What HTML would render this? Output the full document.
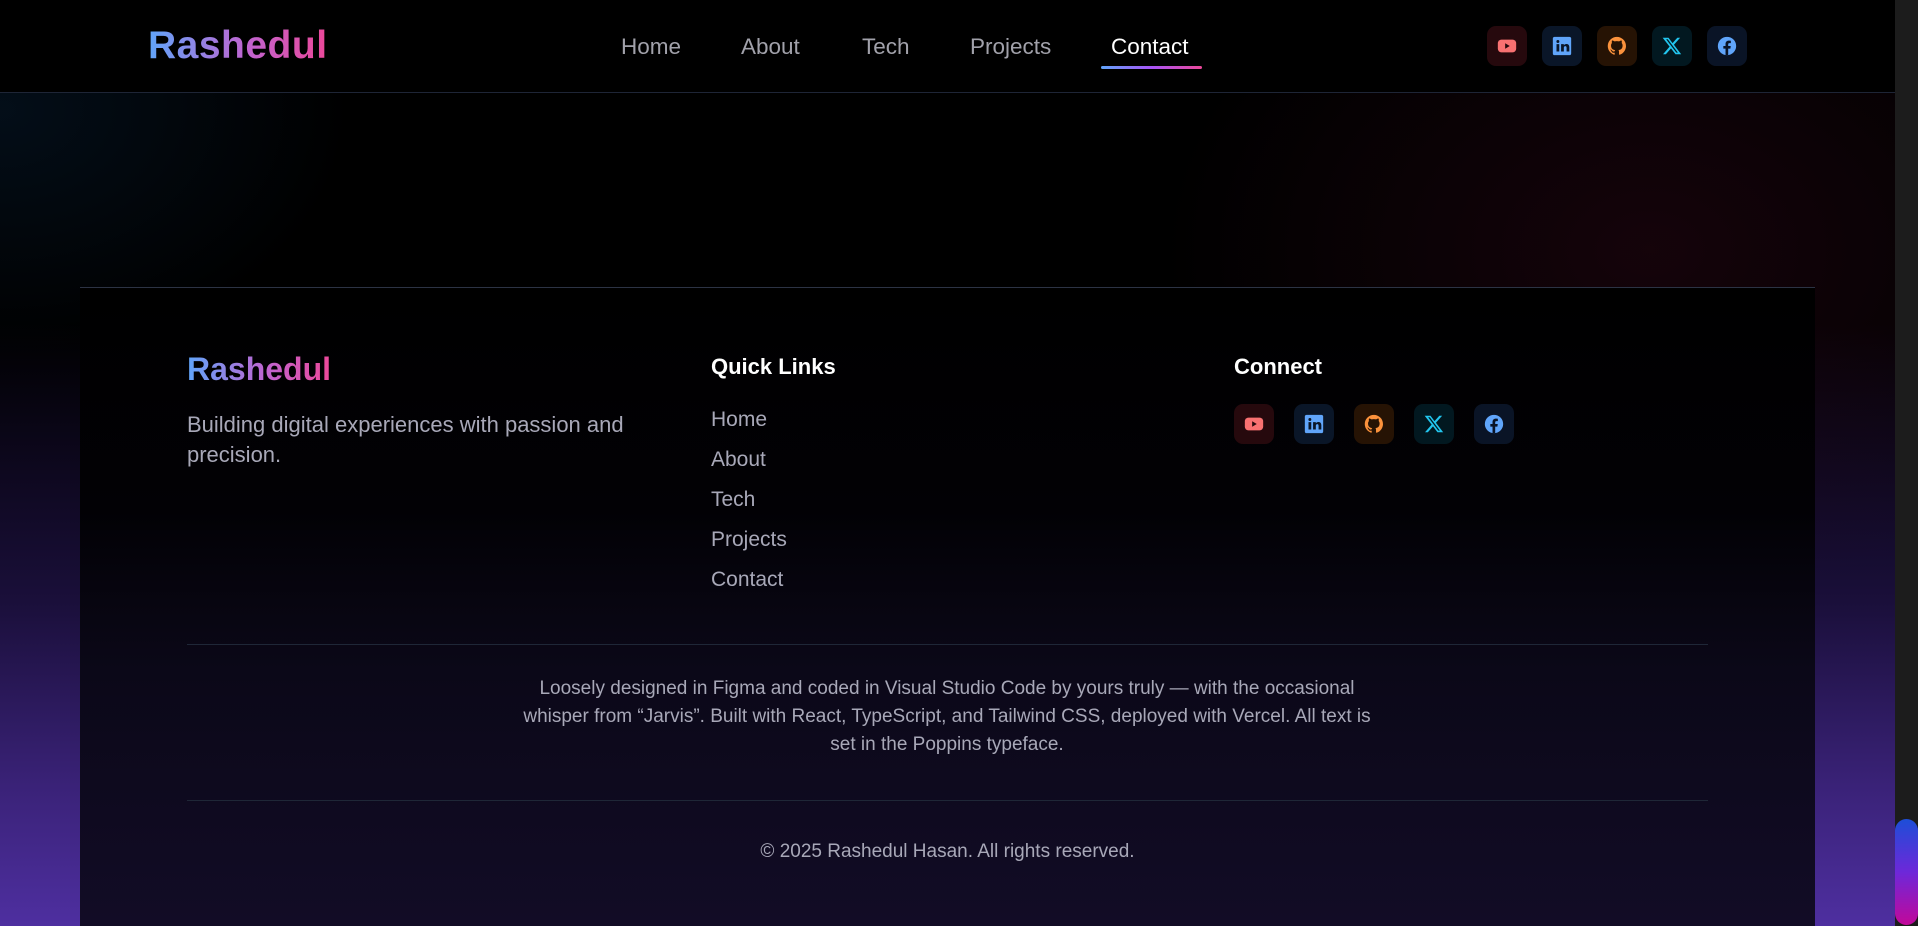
<!DOCTYPE html>
<html><head><meta charset="utf-8"><style>
*{margin:0;padding:0;box-sizing:border-box}
html,body{width:1918px;height:926px;overflow:hidden;background:#000;font-family:"Liberation Sans",sans-serif}
.page{position:absolute;left:0;top:0;width:1895px;height:926px;
background:
radial-gradient(ellipse 700px 500px at 1650px 250px,rgba(60,10,30,0.35),transparent 70%),
radial-gradient(ellipse 500px 350px at 0px 110px,rgba(10,40,70,0.35),transparent 70%),
linear-gradient(180deg,#000 0%,#000 35%,#1a0f3a 65%,#3a2278 85%,#4e2fa0 100%);}
.sb{position:absolute;left:1895px;top:0;width:23px;height:926px;background:#1c1c1c}
.thumb{position:absolute;left:1895px;top:819px;width:23px;height:106px;border-radius:12px;background:linear-gradient(180deg,#1d4ed8,#6d28d9 50%,#c2089a)}
header{position:absolute;left:0;top:0;width:1895px;height:93px;background:#000;border-bottom:1px solid #1e2536}
.grad{background:linear-gradient(90deg,#60a5fa,#c064d0 55%,#ec4899);-webkit-background-clip:text;background-clip:text;color:transparent;font-weight:bold}
.logo{position:absolute;left:148px;top:24px;font-size:39px;letter-spacing:0.5px}
.nav a{position:absolute;top:34px;font-size:22.5px;color:#a1a1aa;text-decoration:none}
.ul{position:absolute;left:1101px;top:66px;width:101px;height:3px;border-radius:2px;background:linear-gradient(90deg,#60a5fa,#a855f7,#ec4899)}
.ic{position:absolute;width:40px;height:40px;border-radius:9px;display:flex;align-items:center;justify-content:center}
.ic svg{width:22px;height:22px}
.yt{background:#26090d}.li{background:#0a1628}.gh{background:#261304}.xx{background:#021820}.fb{background:#0a1426}
.foot{position:absolute;left:80px;top:287px;width:1735px;height:639px;border-top:1px solid #2c3344;
background:linear-gradient(180deg,#000 0%,#020105 35%,#0b0818 60%,#120c26 100%)}
.f{position:absolute;color:#a8a8b8}
.line{position:absolute;left:107px;width:1521px;height:1px;background:#1f2737}
</style></head><body>
<div class="page"></div>
<header>
<div class="logo grad">Rashedul</div>
<div class="nav">
<a style="left:621px">Home</a><a style="left:741px">About</a><a style="left:862px">Tech</a><a style="left:970px">Projects</a><a style="left:1111px;color:#fff">Contact</a>
</div>
<div class="ul"></div>
<div id="hic"></div>
</header>
<div class="foot">
<div class="grad" style="position:absolute;left:107px;top:63px;font-size:32px">Rashedul</div>
<div class="f" style="left:107px;top:122px;font-size:22px;line-height:30px;width:500px">Building digital experiences with passion and precision.</div>
<div style="position:absolute;left:631px;top:66px;color:#fff;font-size:22px;font-weight:bold">Quick Links</div>
<div class="f" style="left:631px;top:112px;font-size:21px;line-height:40px">Home<br>About<br>Tech<br>Projects<br>Contact</div>
<div style="position:absolute;left:1154px;top:66px;color:#fff;font-size:22px;font-weight:bold">Connect</div>
<div class="line" style="top:356px"></div>
<div class="f" style="left:437px;top:387px;width:860px;text-align:center;font-size:19px;line-height:28px">Loosely designed in Figma and coded in Visual Studio Code by yours truly — with the occasional whisper from “Jarvis”. Built with React, TypeScript, and Tailwind CSS, deployed with Vercel. All text is set in the Poppins typeface.</div>
<div class="line" style="top:512px"></div>
<div class="f" style="left:0;width:1735px;top:553px;text-align:center;font-size:19px">© 2025 Rashedul Hasan. All rights reserved.</div>
</div>
<div class="sb"></div><div class="thumb"></div>
<script>
var icons=[
['yt','<svg viewBox="0 0 24 24"><rect x="2" y="5" width="20" height="14" rx="4" fill="#f87171"/><path d="M10 9l5 3-5 3z" fill="#26090d"/></svg>'],
['li','<svg viewBox="0 0 24 24"><rect x="2" y="2" width="20" height="20" rx="2" fill="#60a5fa"/><path d="M6 10h3v8H6zM7.5 5.5a1.6 1.6 0 110 3.2 1.6 1.6 0 010-3.2zM11 10h3v1.3c.5-.9 1.6-1.5 2.8-1.5 2.2 0 3.2 1.3 3.2 3.8V18h-3v-4c0-1.1-.4-1.8-1.4-1.8s-1.6.7-1.6 1.8v4h-3z" fill="#0a1628"/></svg>'],
['gh','<svg viewBox="0 0 24 24"><path fill="#fb923c" d="M12 2a10 10 0 00-3.2 19.5c.5.1.7-.2.7-.5v-1.7c-2.8.6-3.4-1.3-3.4-1.3-.5-1.2-1.1-1.5-1.1-1.5-.9-.6.1-.6.1-.6 1 .1 1.5 1 1.5 1 .9 1.5 2.4 1.1 2.9.8.1-.7.4-1.1.6-1.3-2.2-.3-4.6-1.1-4.6-5 0-1.1.4-2 1-2.7-.1-.3-.4-1.3.1-2.7 0 0 .8-.3 2.7 1a9.4 9.4 0 015 0c1.9-1.3 2.7-1 2.7-1 .5 1.4.2 2.4.1 2.7.6.7 1 1.6 1 2.7 0 3.9-2.4 4.7-4.6 5 .4.3.7.9.7 1.9V21c0 .3.2.6.7.5A10 10 0 0012 2z"/></svg>'],
['xx','<svg viewBox="0 0 24 24"><path fill="#22c5ee" d="M17.8 3h3.1l-6.8 7.7L22 21h-6.2l-4.9-6.4L5.3 21H2.2l7.2-8.3L1.8 3h6.4l4.4 5.8zm-1.1 16.2h1.7L7.4 4.7H5.6z"/></svg>'],
['fb','<svg viewBox="0 0 24 24"><circle cx="12" cy="12" r="10" fill="#60a5fa"/><path fill="#0a1426" d="M13.3 22v-7.2h2.4l.4-2.8h-2.8v-1.8c0-.8.3-1.4 1.4-1.4h1.5V6.3c-.3 0-1.2-.1-2.2-.1-2.2 0-3.6 1.3-3.6 3.7V12H8v2.8h2.4V22z"/></svg>']];
var h='',f='';
icons.forEach(function(c,i){
h+='<div class="ic '+c[0]+'" style="left:'+(1487+i*55)+'px;top:26px">'+c[1]+'</div>';
f+='<div class="ic '+c[0]+'" style="left:'+(1234+i*60)+'px;top:404px">'+c[1]+'</div>';});
document.getElementById('hic').innerHTML=h;
document.body.insertAdjacentHTML('beforeend',f);
</script>
</body></html>
